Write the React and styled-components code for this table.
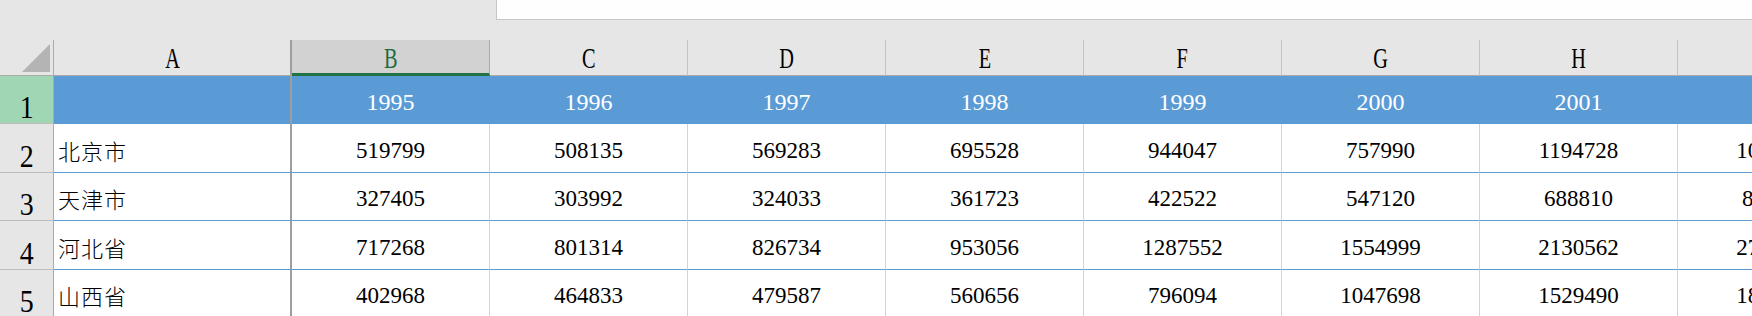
import React from 'react'
import styled, { createGlobalStyle } from 'styled-components'

const GlobalStyle = createGlobalStyle`
    html, body {
        margin: 0;
        padding: 0;
        background: #fff;
        overflow: hidden;
    }
`;

const Window = styled.div`
    width: 1752px;
    height: 316px;
    overflow: hidden;
    background: #e6e6e6;
`;

const TopBar = styled.div`
    height: 40px;
    display: flex;
`;

const FormulaBox = styled.div`
    margin-left: 496px;
    flex: 1;
    height: 20px;
    box-sizing: border-box;
    background: #fefefe;
    border-left: 1px solid #c6c6c6;
    border-bottom: 1px solid #c6c6c6;
`;

const Sheet = styled.div`
    display: grid;
    grid-template-columns: 54px 238px repeat(8, 198px);
    grid-template-rows: 36px 48px 49px 48px 49px 48px;
    background: #fff;

    & > div {
        box-sizing: border-box;
        display: flex;
        overflow: hidden;
        white-space: nowrap;
    }
`;

const Corner = styled.div`
    background: #e6e6e6;
    border-right: 1px solid #ababab;
    border-bottom: 1px solid #ababab;
    justify-content: flex-end;
    align-items: flex-end;
    padding: 0 3px 3px 0;
`;

const Triangle = styled.span`
    width: 28px;
    height: 28px;
    background: #b4b4b4;
    clip-path: polygon(100% 0, 100% 100%, 0 100%);
`;

const ColHeader = styled.div`
    background: ${p => (p.$selected ? '#d2d2d2' : '#e6e6e6')};
    border-right: ${p => (p.$freeze ? '2px solid #9e9e9e' : p.$selected ? '1px solid #ababab' : '1px solid #c3c3c3')};
    border-bottom: ${p => (p.$selected ? '3px solid #217346' : '1px solid #ababab')};
    justify-content: center;
    align-items: flex-end;
    padding-bottom: ${p => (p.$selected ? '0' : '2px')};
`;

const Letter = styled.span`
    display: inline-block;
    font-family: "Liberation Serif", serif;
    font-size: 29px;
    line-height: 29px;
    transform: scaleX(0.7);
    color: ${p => (p.$selected ? '#1e6b41' : '#000')};
`;

const RowHeader = styled.div`
    background: ${p => (p.$selected ? '#a0d6b4' : '#e6e6e6')};
    border-right: 1px solid #ababab;
    border-bottom: 1px solid #bdbdbd;
    justify-content: center;
    align-items: flex-end;
`;

const RowNum = styled.span`
    display: inline-block;
    font-family: "Liberation Serif", serif;
    font-size: 31px;
    line-height: 31px;
    transform: scaleX(0.9);
    color: #000;
`;

const Cell = styled.div`
    background: ${p => (p.$head ? '#5b9bd5' : '#fff')};
    border-right: ${p => (p.$freeze ? '2px solid #9e9e9e' : p.$head ? '1px solid #5b9bd5' : '1px solid #d4d4d4')};
    border-bottom: 1px solid #5b9bd5;
    justify-content: ${p => (p.$left ? 'flex-start' : 'center')};
    align-items: flex-end;
    padding-left: ${p => (p.$left ? '4px' : '0')};
    padding-bottom: ${p => (p.$head ? '9px' : '10px')};
    color: ${p => (p.$head ? '#fff' : '#000')};
    font-family: "Liberation Serif", serif;
    font-size: ${p => (p.$head ? '24px' : '23px')};
    line-height: ${p => (p.$head ? '24px' : '23px')};
`;

const Name = styled.span`
    font-family: "Noto Sans CJK SC", "Noto Sans CJK JP", sans-serif;
    font-weight: 300;
    font-size: 22px;
    line-height: 22px;
    letter-spacing: 1px;
    margin-bottom: 1px;
`;

const letters = ['A', 'B', 'C', 'D', 'E', 'F', 'G', 'H', 'I']

const years = ['1995', '1996', '1997', '1998', '1999', '2000', '2001', '2002']

const rows = [
    { name: '北京市', values: ['519799', '508135', '569283', '695528', '944047', '757990', '1194728', '1018560'] },
    { name: '天津市', values: ['327405', '303992', '324033', '361723', '422522', '547120', '688810', '835190'] },
    { name: '河北省', values: ['717268', '801314', '826734', '953056', '1287552', '1554999', '2130562', '2704180'] },
    { name: '山西省', values: ['402968', '464833', '479587', '560656', '796094', '1047698', '1529490', '1864370'] },
]

const App = () => {
    return (
        <Window>
            <GlobalStyle />
            <TopBar>
                <FormulaBox />
            </TopBar>
            <Sheet>
                <Corner><Triangle /></Corner>
                {letters.map(l => (
                    <ColHeader key={l} $selected={l === 'B'} $freeze={l === 'A'}>
                        {l !== 'I' && <Letter $selected={l === 'B'}>{l}</Letter>}
                    </ColHeader>
                ))}

                <RowHeader $selected><RowNum>1</RowNum></RowHeader>
                <Cell $head $freeze />
                {years.map(y => (
                    <Cell key={y} $head>{y}</Cell>
                ))}

                {rows.map((r, i) => (
                    <React.Fragment key={r.name}>
                        <RowHeader><RowNum>{i + 2}</RowNum></RowHeader>
                        <Cell $left $freeze><Name>{r.name}</Name></Cell>
                        {r.values.map((v, j) => (
                            <Cell key={j}>{v}</Cell>
                        ))}
                    </React.Fragment>
                ))}
            </Sheet>
        </Window>
    )
}

export default App
